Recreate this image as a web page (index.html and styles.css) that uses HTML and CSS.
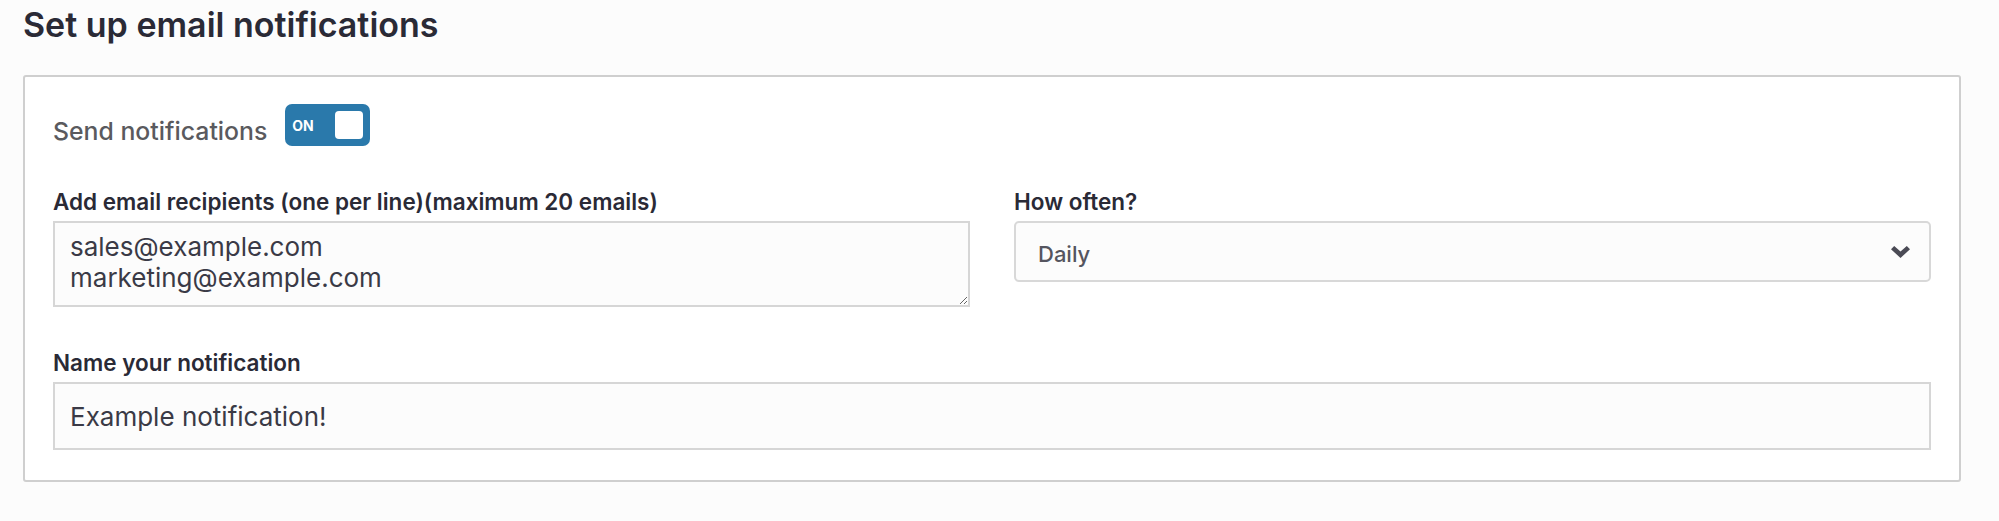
FILE: index.html
```html
<!DOCTYPE html>
<html lang="en">
<head>
<meta charset="utf-8">
<title>Set up email notifications</title>
<link rel="stylesheet" href="styles.css">
</head>
<body>
  <h1 class="page-title">Set up email notifications</h1>
  <section class="card">
    <div class="toggle-row">
      <span class="toggle-text">Send notifications</span>
      <div class="toggle" role="switch" aria-checked="true">
        <span class="toggle-on">ON</span>
        <span class="toggle-knob"></span>
      </div>
    </div>
    <div class="fields-row">
      <div class="field">
        <label class="field-label" for="recipients">Add email recipients (one per line)(maximum 20 emails)</label>
        <textarea id="recipients" class="textarea">sales@example.com
marketing@example.com</textarea>
      </div>
      <div class="field">
        <label class="field-label">How often?</label>
        <div class="select">
          <span class="select-value">Daily</span>
          <svg class="chevron" width="19" height="12" viewBox="0 0 19 12"><path d="M0 3.2 L3.2 0 L9.5 5.6 L15.8 0 L19 3.2 L9.5 12 Z" fill="#4b4b55"/></svg>
        </div>
      </div>
    </div>
    <div class="field name-field">
      <label class="field-label" for="name">Name your notification</label>
      <input id="name" class="text-input" type="text" value="Example notification!">
    </div>
  </section>
</body>
</html>
```
FILE: styles.css
```css
* { box-sizing: border-box; }

html, body {
  margin: 0;
  background: #fcfcfc;
}

body {
  font-family: Inter, "Noto Sans", sans-serif;
  color: #2c2c38;
  padding: 5px 38px 0 23px;
}

.page-title {
  margin: 0;
  font-size: 34px;
  line-height: 40px;
  font-weight: 600;
  color: #2a2a36;
}

.card {
  margin-top: 30px;
  background: #fff;
  border: 2px solid #cfcfcf;
  border-radius: 3px;
  padding: 27px 28px 30px 28px;
}

.toggle-row {
  display: flex;
  align-items: flex-end;
  gap: 18px;
}

.toggle-text {
  font-size: 24.8px;
  line-height: 29px;
  font-weight: 500;
  color: #5a5a5e;
}

.toggle {
  width: 85px;
  height: 42px;
  border-radius: 7px;
  background: #2a79ab;
  display: flex;
  align-items: center;
  justify-content: space-between;
  padding: 0 7px;
}

.toggle-on {
  color: #fff;
  font-size: 14px;
  font-weight: 700;
}

.toggle-knob {
  width: 28px;
  height: 28px;
  border-radius: 4px;
  background: #fff;
}

.fields-row {
  display: grid;
  grid-template-columns: 1fr 1fr;
  gap: 44px;
  margin-top: 43px;
}

.field {
  display: flex;
  flex-direction: column;
}

.field-label {
  font-size: 22.5px;
  line-height: 25px;
  font-weight: 600;
  color: #2a2a36;
  margin-bottom: 7px;
}

.textarea {
  display: block;
  width: 100%;
  height: 86px;
  border: 2px solid #d6d6d6;
  border-radius: 0;
  background: #fcfcfc;
  padding: 8px 15px 0;
  font-family: Inter, "Noto Sans", sans-serif;
  font-size: 26px;
  line-height: 31px;
  color: #3a3a46;
  margin: 0;
}

.select {
  height: 61px;
  border: 2px solid #d8d8d8;
  border-radius: 5px;
  background: #fcfcfc;
  display: flex;
  align-items: center;
  justify-content: space-between;
  padding: 4px 19px 0 22px;
}

.chevron {
  margin-top: -4px;
}

.select-value {
  font-size: 22px;
  font-weight: 500;
  color: #55555f;
}

.name-field {
  margin-top: 43px;
}

.text-input {
  display: block;
  width: 100%;
  height: 68px;
  border: 2px solid #d6d6d6;
  border-radius: 0;
  background: #fcfcfc;
  padding: 0 15px;
  font-family: Inter, "Noto Sans", sans-serif;
  font-size: 26px;
  color: #3a3a46;
  margin: 0;
}
```
